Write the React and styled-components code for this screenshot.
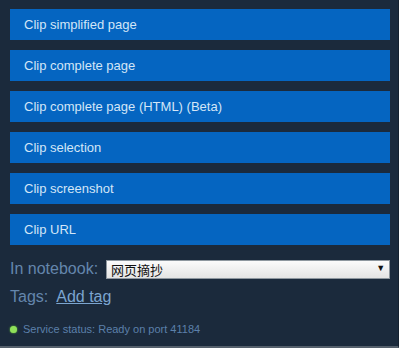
import styled, { createGlobalStyle } from "styled-components";

const GlobalStyle = createGlobalStyle`
  html, body {
    margin: 0;
    padding: 0;
    background: #1b2a3c;
  }
  body {
    font-family: "Liberation Sans", Arial, sans-serif;
  }
`;

const actions = [
  "Clip simplified page",
  "Clip complete page",
  "Clip complete page (HTML) (Beta)",
  "Clip selection",
  "Clip screenshot",
  "Clip URL",
];

function App() {
  return (
    <>
      <GlobalStyle />
      <Popup>
        <ActionList>
          {actions.map((label) => (
            <ActionButton key={label}>{label}</ActionButton>
          ))}
        </ActionList>
        <FieldRow>
          <Label>In notebook:</Label>
          <SelectWrap>
            <NotebookSelect defaultValue="clip">
              <option value="clip">网页摘抄</option>
            </NotebookSelect>
            <Arrow>▼</Arrow>
          </SelectWrap>
        </FieldRow>
        <TagsRow>
          <Label>Tags:</Label>
          <AddTag href="#">Add tag</AddTag>
        </TagsRow>
        <Status>
          <Dot />
          Service status: Ready on port 41184
        </Status>
      </Popup>
    </>
  );
}

const Popup = styled.div`
  width: 399px;
  height: 348px;
  box-sizing: border-box;
  padding: 9px 9px 0 10px;
  border-bottom: 2px solid #55606c;
  border-right: 1px solid #15212f;
  background: #1b2a3c;
  overflow: hidden;
`;

const ActionList = styled.div`
  display: flex;
  flex-direction: column;
  gap: 10px;
`;

const ActionButton = styled.button`
  display: flex;
  align-items: center;
  height: 31px;
  width: 380px;
  padding: 0 14px;
  border: none;
  background: #0565c1;
  color: #d3e6f7;
  font-family: "Liberation Sans", Arial, sans-serif;
  font-size: 13px;
  text-align: left;
  cursor: pointer;
`;

const FieldRow = styled.div`
  display: flex;
  align-items: center;
  gap: 8px;
  margin-top: 14px;
  height: 20px;
`;

const TagsRow = styled.div`
  display: flex;
  align-items: center;
  gap: 8px;
  margin-top: 8px;
  height: 20px;
`;

const Label = styled.span`
  flex-shrink: 0;
  white-space: nowrap;
  color: #6486ac;
  font-size: 16px;
`;

const SelectWrap = styled.div`
  position: relative;
  flex-shrink: 0;
  width: 284px;
  height: 19px;
`;

const NotebookSelect = styled.select`
  appearance: none;
  width: 100%;
  height: 100%;
  box-sizing: border-box;
  margin: 0;
  padding: 0 0 0 4px;
  border: 1px solid #8e979f;
  border-radius: 0;
  background: linear-gradient(#fbfbfb, #e4e4e4);
  color: #111;
  font-family: "Noto Sans CJK SC", sans-serif;
  font-size: 13px;
  line-height: 17px;
`;

const Arrow = styled.span`
  position: absolute;
  right: 5px;
  top: 3px;
  font-size: 9px;
  color: #111;
  pointer-events: none;
`;

const AddTag = styled.a`
  color: #7ba5d0;
  font-size: 16px;
  text-decoration: underline;
`;

const Status = styled.div`
  display: flex;
  align-items: center;
  gap: 6px;
  margin-top: 16px;
  color: #5b80aa;
  font-size: 11px;
`;

const Dot = styled.span`
  width: 7px;
  height: 7px;
  border-radius: 50%;
  background: #8fe05a;
  box-shadow: 0 0 2px #6ccf3a;
`;

export default App;
